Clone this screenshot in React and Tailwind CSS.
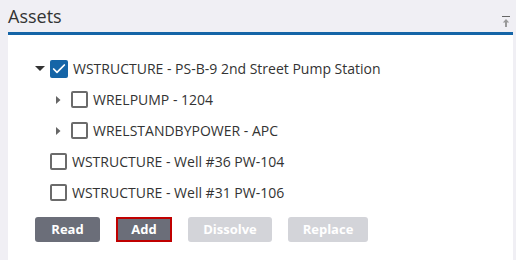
import { Check } from 'lucide-react'

const font = { fontFamily: '"Open Sans", "Liberation Sans", sans-serif' }

function Caret({ open }) {
  if (open) {
    return (
      <svg width="10" height="6" viewBox="0 0 10 6" className="shrink-0">
        <path d="M0 0 L10 0 L5 5 Z" fill="#333" />
      </svg>
    )
  }
  return (
    <svg width="5" height="8" viewBox="0 0 5 8" className="shrink-0">
      <path d="M0 0 L4.5 4 L0 8 Z" fill="#666" />
    </svg>
  )
}

function Box({ checked }) {
  if (checked) {
    return (
      <span className="w-[18px] h-[18px] rounded-[2px] bg-[#1565a7] flex items-center justify-center shrink-0">
        <Check size={16} strokeWidth={2.6} className="text-white" />
      </span>
    )
  }
  return <span className="w-[17px] h-[17px] rounded-[2px] border-2 border-[#6b6b6b] bg-white shrink-0" />
}

function Row({ indent, caret, checked, label }) {
  return (
    <div className="h-[31px] flex items-center" style={{ paddingLeft: indent }}>
      <div className="w-[15px] flex items-center">{caret && <Caret open={caret === 'open'} />}</div>
      <Box checked={checked} />
      <span className="ml-[5px] text-[14px] text-[#333]">{label}</span>
    </div>
  )
}

export default function App() {
  return (
    <div className="w-[516px] h-[260px] bg-[#f0eff4] pl-2 pr-[3px] flex flex-col overflow-hidden" style={font}>
      <div className="h-[32px] flex items-start justify-between pt-[3px]">
        <h2 className="text-[18px] text-[#333] leading-[26px]">Assets</h2>
        <svg width="8" height="11" viewBox="0 0 8 11" className="mt-[13px] mr-[3px]">
          <path d="M0 0.5 H8" stroke="#666" strokeWidth="1" />
          <path d="M4 3 L0.8 6.5 H3 V11 H5 V6.5 H7.2 Z" fill="#999" />
        </svg>
      </div>
      <div className="h-[3px] bg-[#1565a7]" />
      <div className="flex-1 bg-white pt-[18px]">
        <Row indent={27} caret="open" checked label="WSTRUCTURE - PS-B-9 2nd Street Pump Station" />
        <Row indent={48} caret="closed" label="WRELPUMP - 1204" />
        <Row indent={48} caret="closed" label="WRELSTANDBYPOWER - APC" />
        <Row indent={27} label="WSTRUCTURE - Well #36 PW-104" />
        <Row indent={27} label="WSTRUCTURE - Well #31 PW-106" />
        <div className="flex gap-4 pl-[27px] mt-[9px]">
          <button className="w-[65px] h-[25px] rounded-[3px] bg-[#6b6e79] text-white text-[13px] font-bold">Read</button>
          <button className="w-[56px] h-[25px] bg-[#6b6e79] border-2 border-[#c00000] text-white text-[13px] font-bold">Add</button>
          <button className="w-[84px] h-[25px] rounded-[3px] bg-[#d3d4d9] text-white text-[13px] font-bold">Dissolve</button>
          <button className="w-[80px] h-[25px] rounded-[3px] bg-[#d3d4d9] text-white text-[13px] font-bold">Replace</button>
        </div>
      </div>
    </div>
  )
}
